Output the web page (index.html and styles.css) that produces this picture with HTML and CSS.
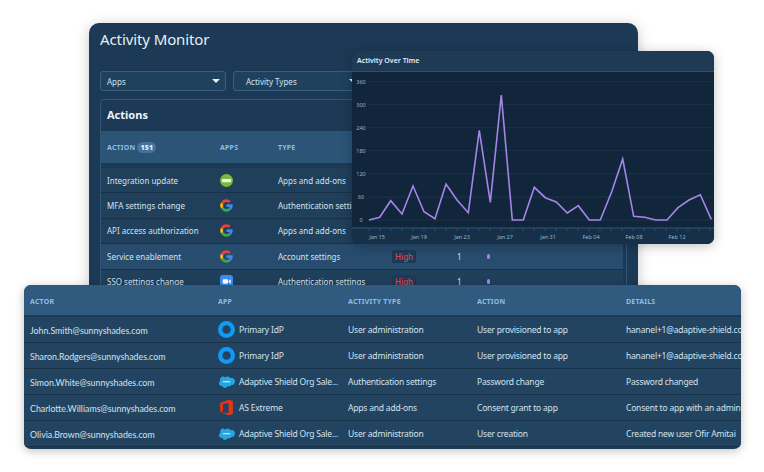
FILE: index.html
```html
<!DOCTYPE html>
<html lang="en">
<head>
    <meta charset="UTF-8">
    <title>Activity Monitor</title>
    <link rel="stylesheet" href="styles.css">
</head>
<body>
    <svg class="defs" width="0" height="0">
        <symbol id="google" viewBox="0 0 24 24">
            <path fill="none" stroke="#4285f4" stroke-width="5" d="M12 12.200h9c0 2.600-1 4.800-2.800 6.400"/>
            <path fill="none" stroke="#34a853" stroke-width="5" d="M18.200 18.600C16.600 20.100 14.500 21 12 21c-3.600 0-6.600-2.100-8.100-5"/>
            <path fill="none" stroke="#fbbc05" stroke-width="5" d="M3.900 16c-1.200-2.500-1.200-5.500 0-8"/>
            <path fill="none" stroke="#ea4335" stroke-width="5" d="M3.900 8C5.400 5.100 8.400 3 12 3c2.300 0 4.400.8 6 2.300"/>
        </symbol>
        <symbol id="idp" viewBox="0 0 24 24">
            <circle cx="12" cy="12" r="9" fill="none" stroke="#0f9bf5" stroke-width="6"/>
        </symbol>
        <symbol id="salesforce" viewBox="0 0 24 18">
            <path fill="#27a5e0" d="M10 3.600C10.900 2.600 12.100 2 13.500 2c1.800 0 3.400 1 4.200 2.500.7-.3 1.400-.5 2.200-.5C22 4 24 6.300 24 9s-2 5-4.100 5c-.3 0-.7 0-1-.1-.7 1.200-2 2-3.400 2-.6 0-1.200-.1-1.700-.4-.7 1.500-2.100 2.500-3.800 2.500-1.800 0-3.300-1.100-3.900-2.700-.3.100-.6.100-.8.100C3 15.400 1.400 13.700 1.400 11.600c0-1.400.7-2.600 1.800-3.300C3 7.800 2.900 7.200 2.900 6.600 2.900 4.100 4.900 2 7.300 2c1.100 0 2 .6 2.700 1.600z"/>
            <rect x="6.500" y="8.800" width="11" height="1.400" rx=".7" fill="#e8f6fd"/>
        </symbol>
        <symbol id="office" viewBox="0 0 24 24">
            <path fill="#e8340f" d="M3 5.500 15 1l6 1.700v18.600L15 23 3 18.500l12 1.500V5.500L7 7.200v9.600L3 18.500z"/>
        </symbol>
    </svg>

    <section class="monitor">
        <h1>Activity Monitor</h1>
        <div class="filters">
            <div class="select select-apps">Apps<span class="caret"></span></div>
            <div class="select select-types">Activity Types<span class="caret"></span></div>
        </div>
        <div class="actions">
            <h2>Actions</h2>
            <div class="actions-head">
                <span>ACTION <b class="count">151</b></span>
                <span>APPS</span>
                <span>TYPE</span>
            </div>
            <div class="action-row">
                <span>Integration update</span>
                <svg class="app-icon" viewBox="0 0 24 24"><circle cx="12" cy="12" r="12" fill="#7cb93a"/><rect x="3.500" y="9" width="17" height="6" rx="1.500" fill="#eef7e0"/></svg>
                <span>Apps and add-ons</span>
            </div>
            <div class="action-row">
                <span>MFA settings change</span>
                <svg class="app-icon"><use href="#google"/></svg>
                <span>Authentication settings</span>
            </div>
            <div class="action-row">
                <span>API access authorization</span>
                <svg class="app-icon"><use href="#google"/></svg>
                <span>Apps and add-ons</span>
            </div>
            <div class="action-row selected">
                <span>Service enablement</span>
                <svg class="app-icon"><use href="#google"/></svg>
                <span>Account settings</span>
                <span class="risk">High</span>
                <span class="num">1</span>
                <i class="dot"></i>
            </div>
            <div class="action-row">
                <span>SSO settings change</span>
                <svg class="app-icon" viewBox="0 0 24 24"><rect width="24" height="24" rx="6" fill="#3d8cf0"/><rect x="5" y="8" width="10" height="8" rx="2" fill="#fff"/><path fill="#fff" d="m16 11 4-3v8l-4-3z"/></svg>
                <span>Authentication settings</span>
                <span class="risk">High</span>
                <span class="num">1</span>
                <i class="dot"></i>
            </div>
        </div>
    </section>

    <section class="chart">
        <h3>Activity Over Time</h3>
        <svg class="plot" width="362" height="172" viewBox="0 0 362 172">
            <g class="grid">
                <path d="M16 9.700H362M16 32.700H362M16 55.700H362M16 78.700H362M16 102H362M16 125H362M16 148H362"/>
            </g>
            <rect class="axis-band" x="0" y="155" width="362" height="17"/>
            <path class="axis" d="M0 156H362M17 156v3M28 156v3M39 156v3M50 156v3M61 156v3M72 156v3M83 156v3M94 156v3M105 156v3M116 156v3M127 156v3M138 156v3M149 156v3M160 156v3M171 156v3M182 156v3M193 156v3M204 156v3M215 156v3M226 156v3M237 156v3M248 156v3M259 156v3M270 156v3M281 156v3M292 156v3M303 156v3M314 156v3M325 156v3M336 156v3M347 156v3M358 156v3"/>
            <g class="y-labels">
                <text x="9" y="11.500">360</text>
                <text x="9" y="34.500">300</text>
                <text x="9" y="57.500">240</text>
                <text x="9" y="80.500">180</text>
                <text x="9" y="104">120</text>
                <text x="9" y="127">60</text>
                <text x="9" y="150">0</text>
            </g>
            <g class="x-labels">
                <text x="25" y="167">Jan 15</text>
                <text x="67" y="167">Jan 19</text>
                <text x="110" y="167">Jan 23</text>
                <text x="153" y="167">Jan 27</text>
                <text x="196" y="167">Jan 31</text>
                <text x="239" y="167">Feb 04</text>
                <text x="282" y="167">Feb 08</text>
                <text x="325" y="167">Feb 12</text>
            </g>
            <polyline class="line" points="17,148 27.700,145.300 38.700,128.700 50,142 61,114 72,139.700 83,146.700 94,112 105,128 116.300,140.700 127.300,58.300 138.300,130.300 149.300,23 160.300,148 171.300,148 182.300,115.300 193.300,125.700 204.300,130 215.300,141 226.300,133.700 237.300,148 248.300,148 259.700,119.700 270.700,87 281.700,144.300 292.700,145.300 303.700,148 315,148 326,135.700 337,128 348.300,122.700 359.300,147.300"/>
        </svg>
    </section>

    <section class="events">
        <div class="events-row events-head">
            <span>ACTOR</span>
            <span>APP</span>
            <span>ACTIVITY TYPE</span>
            <span>ACTION</span>
            <span>DETAILS</span>
        </div>
        <div class="events-row">
            <span class="actor">John.Smith@sunnyshades.com</span>
            <span class="app"><svg class="event-icon"><use href="#idp"/></svg>Primary IdP</span>
            <span>User administration</span>
            <span>User provisioned to app</span>
            <span>hananel+1@adaptive-shield.co</span>
        </div>
        <div class="events-row">
            <span class="actor">Sharon.Rodgers@sunnyshades.com</span>
            <span class="app"><svg class="event-icon"><use href="#idp"/></svg>Primary IdP</span>
            <span>User administration</span>
            <span>User provisioned to app</span>
            <span>hananel+1@adaptive-shield.co</span>
        </div>
        <div class="events-row">
            <span class="actor">Simon.White@sunnyshades.com</span>
            <span class="app"><svg class="event-icon"><use href="#salesforce"/></svg>Adaptive Shield Org Sale...</span>
            <span>Authentication settings</span>
            <span>Password change</span>
            <span>Password changed</span>
        </div>
        <div class="events-row">
            <span class="actor">Charlotte.Williams@sunnyshades.com</span>
            <span class="app"><svg class="event-icon"><use href="#office"/></svg>AS Extreme</span>
            <span>Apps and add-ons</span>
            <span>Consent grant to app</span>
            <span>Consent to app with an admin</span>
        </div>
        <div class="events-row">
            <span class="actor">Olivia.Brown@sunnyshades.com</span>
            <span class="app"><svg class="event-icon"><use href="#salesforce"/></svg>Adaptive Shield Org Sale...</span>
            <span>User administration</span>
            <span>User creation</span>
            <span>Created new user Ofir Amitai</span>
        </div>
    </section>
</body>
</html>
```

FILE: styles.css
```css
body {
    margin: 0;
    width: 764px;
    height: 472px;
    overflow: hidden;
    position: relative;
    background: #fff;
    font-family: "Noto Sans", sans-serif;
    color: #d3e2ee;
}

.defs {
    position: absolute;
}

/* the three windows sit on a free canvas */
.monitor {
    position: absolute;
    left: 89px;
    top: 23px;
    width: 549px;
    height: 275px;
    box-sizing: border-box;
    padding: 0 11px;
    border-radius: 10px 10px 0 0;
    background: #1c3a55;
    box-shadow: 0 2px 14px rgba(0, 0, 0, 0.22);
}

.monitor h1 {
    margin: 0;
    padding-top: 5px;
    font-size: 15px;
    line-height: 22px;
    font-weight: 400;
    letter-spacing: -0.1px;
    color: #e6eff6;
}

.filters {
    display: flex;
    gap: 7px;
    margin-top: 21px;
}

.select {
    display: flex;
    align-items: center;
    justify-content: space-between;
    box-sizing: border-box;
    height: 20px;
    padding: 0 5px 0 6px;
    border: 1px solid #35607f;
    border-radius: 3px;
    background: #1f415e;
    font-size: 8px;
}

.select-apps {
    width: 126px;
}

.select-types {
    width: 130px;
    padding-left: 12px;
}

.caret {
    width: 0;
    height: 0;
    border-left: 4px solid transparent;
    border-right: 4px solid transparent;
    border-top: 4px solid #e6eff6;
}

.actions {
    margin-top: 8px;
    border: 1px solid #2f5676;
    border-radius: 3px 3px 0 0;
    background: #1c3a55;
}

.actions h2 {
    margin: 0;
    height: 31px;
    padding-left: 6px;
    font-size: 11px;
    line-height: 30px;
    font-weight: 700;
    color: #edf3f8;
}

.actions-head,
.action-row {
    display: grid;
    grid-template-columns: 113px 58px 114px 65px 30px 1fr;
    align-items: center;
    padding-left: 6px;
}

.actions-head {
    height: 32px;
    margin-bottom: 5px;
    background: #2c5477;
    font-size: 7px;
    font-weight: 700;
    letter-spacing: 0.2px;
    color: #8dbde6;
}

.count {
    display: inline-block;
    padding: 1px 3px;
    border-radius: 8px;
    background: #43739b;
    color: #dcebf6;
}

.action-row {
    height: 25.400px;
    margin-right: 3px;
    border-bottom: 1px solid #173149;
    box-sizing: border-box;
    background: #203f5b;
    font-size: 8px;
    white-space: nowrap;
}

.selected {
    background: #274c6d;
}

.app-icon {
    width: 13px;
    height: 13px;
}

.risk {
    justify-self: start;
    padding: 1px 3px;
    border-radius: 2px;
    background: #1c3a55;
    color: #d8475f;
    font-weight: 500;
}

.dot {
    width: 3px;
    height: 5px;
    border-radius: 2px;
    background: #a77ff0;
}

.chart {
    position: absolute;
    left: 352px;
    top: 51px;
    width: 362px;
    height: 193px;
    border-radius: 7px;
    overflow: hidden;
    background: #11263b;
    box-shadow: 0 2px 12px rgba(0, 0, 0, 0.25);
}

.chart h3 {
    margin: 0;
    height: 21px;
    box-sizing: border-box;
    padding-left: 5px;
    border-bottom: 1px solid #2d5271;
    background: #1e3a54;
    font-size: 7px;
    line-height: 20px;
    font-weight: 600;
    color: #e3edf5;
}

.plot {
    display: block;
}

.grid path {
    fill: none;
    stroke: #1a3248;
    stroke-width: 1;
}

.axis-band {
    fill: #16304a;
}

.axis {
    fill: none;
    stroke: #2f5170;
    stroke-width: 1;
}

.y-labels text,
.x-labels text {
    font-size: 5.500px;
    fill: #9fb4c6;
    text-anchor: middle;
}

.line {
    fill: none;
    stroke: #a585ea;
    stroke-width: 1.600;
}

.events {
    position: absolute;
    left: 24px;
    top: 285px;
    width: 717px;
    height: 164px;
    overflow: hidden;
    border-radius: 7px;
    background: #1d3b56;
    box-shadow: 0 2px 10px rgba(0, 0, 0, 0.25);
}

.events-row {
    display: grid;
    grid-template-columns: 188px 130px 129px 149px 115px;
    align-items: center;
    box-sizing: border-box;
    height: 26px;
    padding-left: 6px;
    border-bottom: 1px solid #193349;
    background: #234461;
    font-size: 8.500px;
    letter-spacing: -0.2px;
    white-space: nowrap;
}

.events-head {
    height: 32px;
    border-bottom: 0;
    background: #305a7e;
    box-shadow: inset 0 -2px 0 #1d3b56;
    font-size: 7px;
    font-weight: 700;
    letter-spacing: 0.2px;
    color: #8dbde6;
}

.events-row span {
    overflow: hidden;
}

.actor {
    padding-top: 1px;
    font-family: Lato, sans-serif;
    font-size: 8.800px;
    letter-spacing: 0;
}

.app {
    display: flex;
    align-items: center;
    gap: 4px;
}

.event-icon {
    flex: none;
    width: 17px;
    height: 17px;
}
```
